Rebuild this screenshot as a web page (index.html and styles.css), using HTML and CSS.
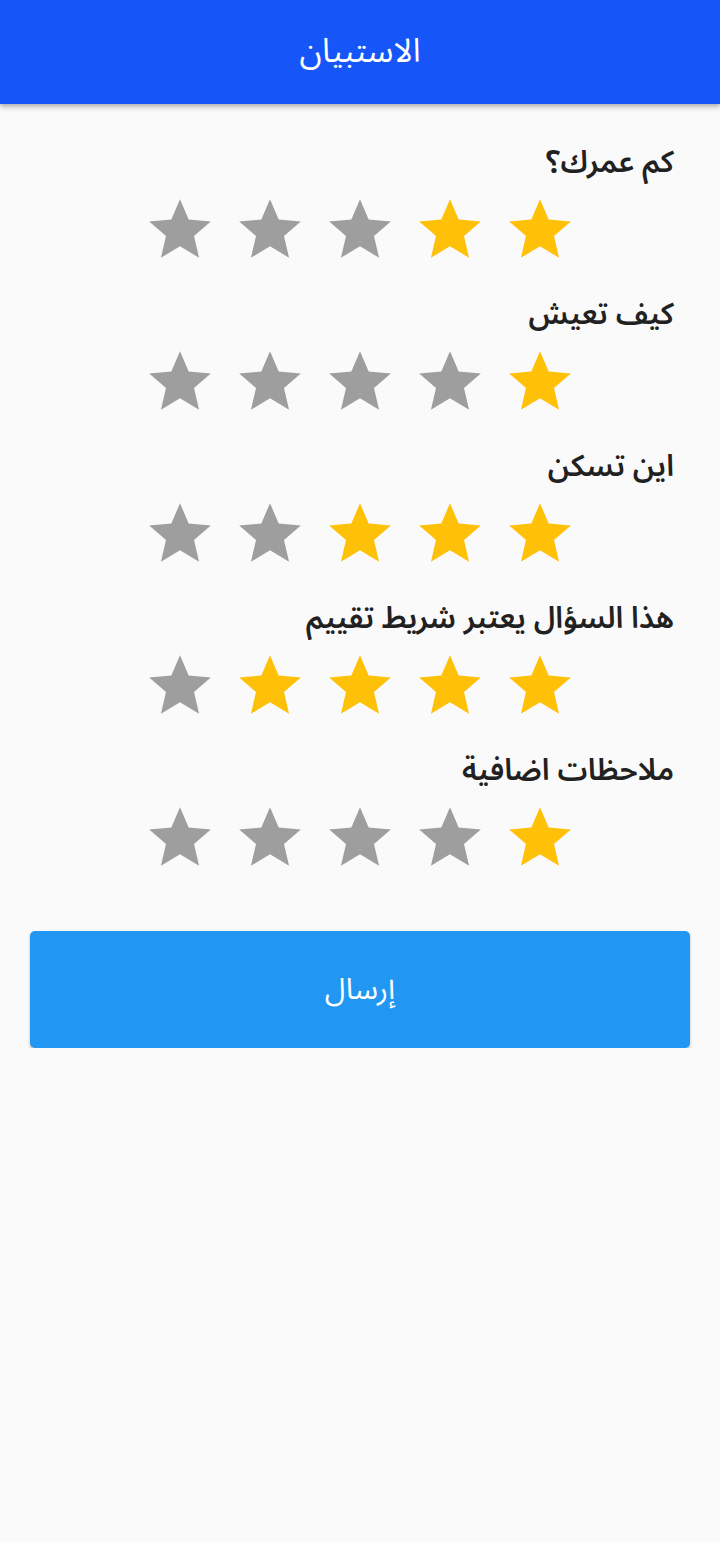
FILE: index.html
```html
<!DOCTYPE html>
<html lang="ar" dir="rtl">
<head>
<meta charset="utf-8">
<link rel="stylesheet" href="styles.css">
</head>
<body>
<svg width="0" height="0" class="defs">
  <defs>
    <path id="star" d="M12 17.27L18.18 21l-1.64-7.03L22 9.24l-7.19-.61L12 2 9.19 8.63 2 9.24l5.46 4.73L5.82 21z"/>
  </defs>
</svg>
<header class="appbar"><h1 class="title">الاستبيان</h1></header>
<main class="content">
  <section class="question">
    <h2 class="label">كم عمرك؟</h2>
    <div class="stars">
      <svg class="star on" viewBox="0 0 24 24"><use href="#star"/></svg>
      <svg class="star on" viewBox="0 0 24 24"><use href="#star"/></svg>
      <svg class="star" viewBox="0 0 24 24"><use href="#star"/></svg>
      <svg class="star" viewBox="0 0 24 24"><use href="#star"/></svg>
      <svg class="star" viewBox="0 0 24 24"><use href="#star"/></svg>
    </div>
  </section>
  <section class="question">
    <h2 class="label">كيف تعيش</h2>
    <div class="stars">
      <svg class="star on" viewBox="0 0 24 24"><use href="#star"/></svg>
      <svg class="star" viewBox="0 0 24 24"><use href="#star"/></svg>
      <svg class="star" viewBox="0 0 24 24"><use href="#star"/></svg>
      <svg class="star" viewBox="0 0 24 24"><use href="#star"/></svg>
      <svg class="star" viewBox="0 0 24 24"><use href="#star"/></svg>
    </div>
  </section>
  <section class="question">
    <h2 class="label">اين تسكن</h2>
    <div class="stars">
      <svg class="star on" viewBox="0 0 24 24"><use href="#star"/></svg>
      <svg class="star on" viewBox="0 0 24 24"><use href="#star"/></svg>
      <svg class="star on" viewBox="0 0 24 24"><use href="#star"/></svg>
      <svg class="star" viewBox="0 0 24 24"><use href="#star"/></svg>
      <svg class="star" viewBox="0 0 24 24"><use href="#star"/></svg>
    </div>
  </section>
  <section class="question">
    <h2 class="label">هذا السؤال يعتبر شريط تقييم</h2>
    <div class="stars">
      <svg class="star on" viewBox="0 0 24 24"><use href="#star"/></svg>
      <svg class="star on" viewBox="0 0 24 24"><use href="#star"/></svg>
      <svg class="star on" viewBox="0 0 24 24"><use href="#star"/></svg>
      <svg class="star on" viewBox="0 0 24 24"><use href="#star"/></svg>
      <svg class="star" viewBox="0 0 24 24"><use href="#star"/></svg>
    </div>
  </section>
  <section class="question">
    <h2 class="label">ملاحظات اضافية</h2>
    <div class="stars">
      <svg class="star on" viewBox="0 0 24 24"><use href="#star"/></svg>
      <svg class="star" viewBox="0 0 24 24"><use href="#star"/></svg>
      <svg class="star" viewBox="0 0 24 24"><use href="#star"/></svg>
      <svg class="star" viewBox="0 0 24 24"><use href="#star"/></svg>
      <svg class="star" viewBox="0 0 24 24"><use href="#star"/></svg>
    </div>
  </section>
  <button class="submit" type="button">إرسال</button>
</main>
</body>
</html>
```
FILE: styles.css
```css
html, body {
  margin: 0;
  padding: 0;
  background: #fafafa;
  font-family: "Noto Sans Arabic", "Noto Sans", "DejaVu Sans", sans-serif;
}
.defs {
  position: absolute;
  width: 0;
  height: 0;
  overflow: hidden;
}
.appbar {
  height: 104px;
  background: #1656f9;
  display: flex;
  align-items: center;
  justify-content: center;
  box-shadow: 0 2px 4px rgba(0,0,0,0.2), 0 4px 6px rgba(0,0,0,0.12);
  position: relative;
  z-index: 1;
}
.title {
  margin: 0;
  color: #fff;
  font-size: 33px;
  font-weight: 400;
  line-height: 40px;
}
.content {
  display: flex;
  flex-direction: column;
  padding: 39px 46px 0 46px;
}
.question {
  display: flex;
  flex-direction: column;
  margin-bottom: 28px;
}
.question:last-of-type {
  margin-bottom: 0;
}
.label {
  margin: 0;
  font-size: 30px;
  font-weight: 600;
  line-height: 40px;
  height: 40px;
  color: #212121;
  text-align: right;
}
.stars {
  display: flex;
  flex-direction: row;
  justify-content: center;
  gap: 16px;
  margin-top: 10px;
}
.star {
  width: 74px;
  height: 74px;
  fill: #9e9e9e;
}
.star.on {
  fill: #ffc107;
}
.submit {
  margin: 56px -16px 0 -16px;
  height: 117px;
  border: none;
  border-radius: 5px;
  background: #2196f3;
  color: #fff;
  font-family: inherit;
  font-size: 30px;
  box-shadow: 0 2px 3px rgba(0,0,0,0.25);
}
```
